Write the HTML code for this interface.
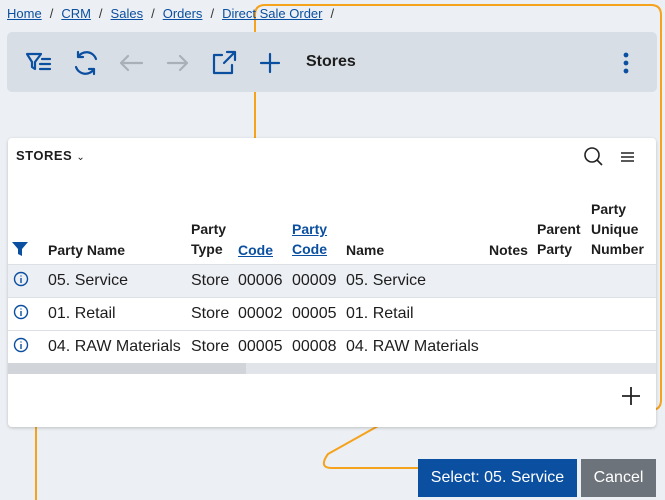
<!DOCTYPE html>
<html><head><style>
*{box-sizing:border-box;margin:0;padding:0}
body{width:665px;height:500px;background:#eceff3;font-family:"Liberation Sans",sans-serif;position:relative;overflow:hidden;color:#1d1d1d}
.bc{position:absolute;top:6px;left:7px;font-size:13px;color:#333}
.bc a{color:#0b4fa0;text-decoration:underline}
.bc span{margin:0 8px}
.tb{position:absolute;left:7px;top:32px;width:650px;height:60px;background:#d8dee5;border-radius:5px}
.ic{position:absolute;top:0}
.card{position:absolute;left:8px;top:138px;width:648px;height:289px;background:#fff;border-radius:4px;box-shadow:0 1px 3px rgba(0,0,0,.2)}
.t{position:absolute;font-size:16px;white-space:nowrap}
.h{position:absolute;font-size:14px;font-weight:bold;line-height:20px;white-space:nowrap}
.h a{color:#0b4fa0;text-decoration:underline}
.line{position:absolute;left:0;width:648px;height:1px;background:#dde1e6}
.btn{position:absolute;top:459px;height:38px;color:#fff;font-size:16px;line-height:38px;text-align:center}
</style></head><body>
<svg width="665" height="500" style="position:absolute;left:0;top:0" fill="none" stroke="#f5a21c" stroke-width="2">
<path d="M255 160V15Q255 5 265 5H651Q661 5 661 15V400Q661 410 651 410"/>
<path d="M36 500V200"/>
<path d="M378 426L328 454Q318 468 332 468H420"/>
</svg>
<div class="bc"><a>Home</a><span>/</span><a>CRM</a><span>/</span><a>Sales</a><span>/</span><a>Orders</a><span>/</span><a>Direct Sale Order</a><span>/</span></div>
<div class="tb">
<svg class="ic" width="650" height="60" fill="none" stroke="#0b4fa0" stroke-width="2.2" stroke-linecap="round" stroke-linejoin="round">
<path d="M20 22H34L28 30V37L25 35V30Z"/><path d="M35 27H43M33 32H43M33 37H43"/>
<path d="M89 27A10 10 0 0 0 71 25M71 20V25H76M69 35A10 10 0 0 0 87 37M87 42V37H82"/>
<g stroke="#a9b0b8"><path d="M114 31H135M121 24L114 31L121 38"/><path d="M161 31H180M173 24L180 31L173 38"/></g>
<path d="M215 23H207V41H225V33M220 20H228V28M228 20L217 31"/>
<path d="M263 22V40M254 31H272"/>
<circle cx="619" cy="23" r="1.3" fill="#0b4fa0"/><circle cx="619" cy="31" r="1.3" fill="#0b4fa0"/><circle cx="619" cy="39" r="1.3" fill="#0b4fa0"/>
</svg>
<div style="position:absolute;left:299px;top:21px;font-weight:bold;font-size:16px">Stores</div>
</div>
<div class="card">
<div style="position:absolute;left:8px;top:10px;font-size:13px;font-weight:bold;letter-spacing:.5px">STORES <span style="font-weight:normal;font-size:10px">&#8964;</span></div>
<svg style="position:absolute;left:574px;top:8px" width="60" height="24" fill="none" stroke="#222" stroke-width="1.6"><circle cx="10" cy="9" r="7"/><path d="M15 14L20 19"/><path d="M39 7H52M39 11H52M39 15H52"/></svg>
<svg style="position:absolute;left:4px;top:104px" width="16" height="14"><path d="M0 0H16L10 7V14L6 12V7Z" fill="#0b4fa0"/></svg>
<div class="h" style="left:40px;top:102px">Party Name</div>
<div class="h" style="left:183px;top:81px">Party<br>Type</div>
<div class="h" style="left:230px;top:102px"><a>Code</a></div>
<div class="h" style="left:284px;top:81px"><a>Party</a><br><a>Code</a></div>
<div class="h" style="left:338px;top:102px">Name</div>
<div class="h" style="left:481px;top:102px">Notes</div>
<div class="h" style="left:529px;top:81px">Parent<br>Party</div>
<div class="h" style="left:583px;top:61px">Party<br>Unique<br>Number</div>
<div class="line" style="top:126px"></div>
<div style="position:absolute;left:0;top:127px;width:648px;height:32px;background:#eceff3"></div>
<div class="line" style="top:159px"></div><div class="line" style="top:192px"></div>
<svg style="position:absolute;left:5px;top:133px" width="18" height="100" fill="none" stroke="#0b4fa0" stroke-width="1.4"><g><circle cx="8" cy="8" r="6.5"/><path d="M8 7V12M8 4.5V5.5"/></g><g transform="translate(0,33)"><circle cx="8" cy="8" r="6.5"/><path d="M8 7V12M8 4.5V5.5"/></g><g transform="translate(0,66)"><circle cx="8" cy="8" r="6.5"/><path d="M8 7V12M8 4.5V5.5"/></g></svg>
<div class="t" style="left:40px;top:134px">05. Service</div><div class="t" style="left:183px;top:134px">Store</div><div class="t" style="left:230px;top:134px">00006</div><div class="t" style="left:284px;top:134px">00009</div><div class="t" style="left:338px;top:134px">05. Service</div>
<div class="t" style="left:40px;top:167px">01. Retail</div><div class="t" style="left:183px;top:167px">Store</div><div class="t" style="left:230px;top:167px">00002</div><div class="t" style="left:284px;top:167px">00005</div><div class="t" style="left:338px;top:167px">01. Retail</div>
<div class="t" style="left:40px;top:200px">04. RAW Materials</div><div class="t" style="left:183px;top:200px">Store</div><div class="t" style="left:230px;top:200px">00005</div><div class="t" style="left:284px;top:200px">00008</div><div class="t" style="left:338px;top:200px">04. RAW Materials</div>
<div style="position:absolute;left:0;top:225px;width:648px;height:11px;background:#e1e4e8"><div style="width:238px;height:11px;background:#d1d4d8"></div></div>
<svg style="position:absolute;left:613px;top:248px" width="20" height="20" stroke="#222" stroke-width="1.8"><path d="M10 1V19M1 10H19"/></svg>
</div>
<div class="btn" style="left:418px;width:159px;background:#0b4fa0">Select: 05. Service</div>
<div class="btn" style="left:581px;width:75px;background:#6c737b">Cancel</div>
</body></html>
